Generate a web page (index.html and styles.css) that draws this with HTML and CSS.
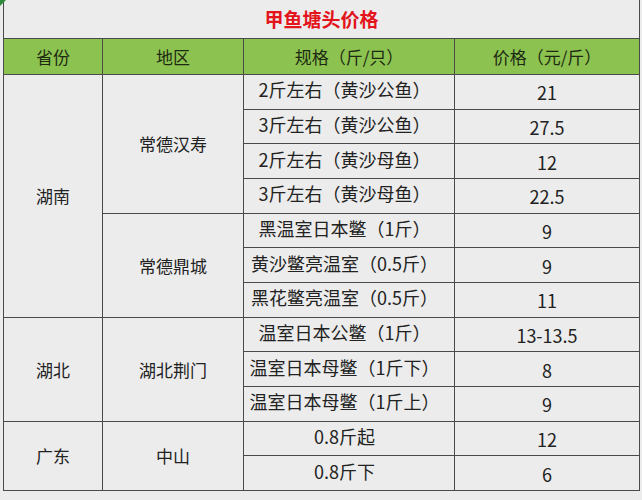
FILE: index.html
```html
<!DOCTYPE html>
<html lang="zh-CN">
<head>
<meta charset="utf-8">
<title>甲鱼塘头价格</title>
<link rel="stylesheet" href="styles.css">
</head>
<body>
<div class="corner"></div>
<div class="sheet">
  <div class="title">甲鱼塘头价格</div>
  <div class="hd">省份</div>
  <div class="hd">地区</div>
  <div class="hd">规格（斤/只）</div>
  <div class="hd">价格（元/斤）</div>

  <div class="c prov span7">湖南</div>
  <div class="c area span4">常德汉寿</div>
  <div class="c spec">2斤左右（黄沙公鱼）</div>
  <div class="c price">21</div>
  <div class="c spec">3斤左右（黄沙公鱼）</div>
  <div class="c price">27.5</div>
  <div class="c spec">2斤左右（黄沙母鱼）</div>
  <div class="c price">12</div>
  <div class="c spec">3斤左右（黄沙母鱼）</div>
  <div class="c price">22.5</div>
  <div class="c area span3">常德鼎城</div>
  <div class="c spec">黑温室日本鳖（1斤）</div>
  <div class="c price">9</div>
  <div class="c spec">黄沙鳖亮温室（0.5斤）</div>
  <div class="c price">9</div>
  <div class="c spec">黑花鳖亮温室（0.5斤）</div>
  <div class="c price">11</div>

  <div class="c prov span3">湖北</div>
  <div class="c area span3">湖北荆门</div>
  <div class="c spec">温室日本公鳖（1斤）</div>
  <div class="c price">13-13.5</div>
  <div class="c spec">温室日本母鳖（1斤下）</div>
  <div class="c price">8</div>
  <div class="c spec">温室日本母鳖（1斤上）</div>
  <div class="c price">9</div>

  <div class="c prov span2">广东</div>
  <div class="c area span2">中山</div>
  <div class="c spec">0.8斤起</div>
  <div class="c price">12</div>
  <div class="c spec">0.8斤下</div>
  <div class="c price">6</div>
</div>
</body>
</html>
```

FILE: styles.css
```css
html, body {
  margin: 0;
  padding: 0;
  background: #ececec;
}
body {
  font-family: "Noto Sans CJK SC", "Noto Sans", sans-serif;
  color: #222;
  position: relative;
  width: 642px;
  height: 500px;
  overflow: hidden;
}
.corner {
  position: absolute;
  left: 0;
  top: 0;
  width: 0;
  height: 0;
  border-top: 6px solid #2f8a3a;
  border-right: 6px solid transparent;
}
.sheet {
  margin-left: 3px;
  width: 637px;
  box-sizing: border-box;
  display: grid;
  grid-template-columns: 98px 140px 210px 184px;
  grid-template-rows: 38px 35px repeat(12, 33.67px);
  gap: 1px;
  padding: 0 1px 1px 1px;
  background: #4a4a4a;
}
.sheet > div {
  background: #ececec;
  display: flex;
  align-items: center;
  justify-content: center;
  white-space: nowrap;
  box-sizing: border-box;
}
.title {
  grid-column: 1 / 5;
  color: #e3141b;
  font-weight: bold;
  font-size: 19px;
  padding-bottom: 1px;
}
.sheet > .hd {
  background: #8cc24f;
  color: #1d2a12;
  font-size: 17px;
}
.c {
  font-size: 17px;
}
.spec {
  font-size: 18px;
  padding-right: 9px;
  padding-bottom: 5px;
}
.price {
  font-size: 18px;
  padding-top: 1px;
}
.span7 { grid-row: span 7; }
.span4 { grid-row: span 4; }
.span3 { grid-row: span 3; }
.span2 { grid-row: span 2; }
```
